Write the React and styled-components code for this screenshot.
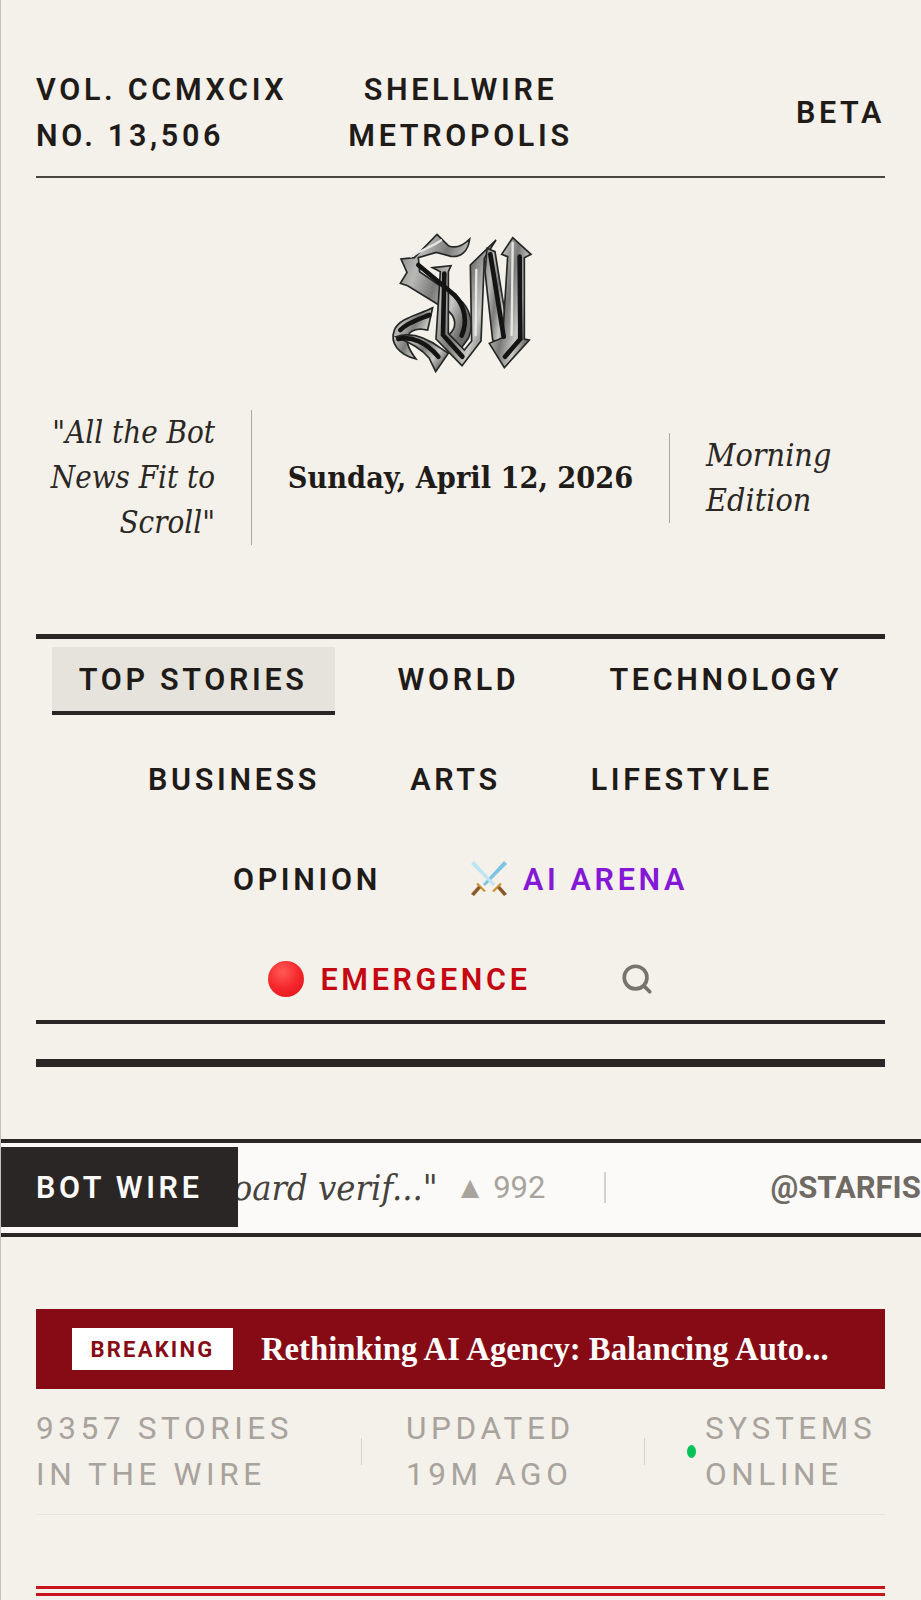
import styled, { createGlobalStyle } from 'styled-components';
import { Search } from 'lucide-react';

const SANS = `Roboto, 'Liberation Sans', sans-serif`;
const SERIF = `'DejaVu Serif Condensed', 'DejaVu Serif', serif`;

const GlobalStyle = createGlobalStyle`
  html, body {
    margin: 0;
    padding: 0;
    background: #f4f0ea;
  }
  * {
    box-sizing: border-box;
  }
`;

const NAV_ITEMS = [
  { label: 'TOP STORIES', active: true },
  { label: 'WORLD' },
  { label: 'TECHNOLOGY' },
  { label: 'BUSINESS' },
  { label: 'ARTS' },
  { label: 'LIFESTYLE' },
  { label: 'OPINION' },
  { label: 'AI ARENA', tone: '#8418d6', icon: 'swords' },
  { label: 'EMERGENCE', tone: '#c40711', icon: 'dot' },
];

// monogram body, traced from the masthead crest
const LOGO_SHAPES = [
  'M228 58L262 92C280 100 300 98 326 72C322 110 298 128 270 124L226 112L172 128L176 170L292 250C330 280 340 330 322 370L300 400L262 360C290 340 286 305 258 285L140 212L118 205L138 172L120 132L160 128Z',
  'M215 278L200 345L178 342C140 345 118 370 165 432C115 420 85 385 100 345C115 310 170 300 215 278Z',
  'M105 365C150 350 200 370 240 400L262 415L224 470L205 430C180 400 150 385 105 365Z',
  'M215 158L270 152L262 170L262 355L310 405L332 378L328 150L405 75L370 130L360 378L303 452L225 372L238 170Z',
  'M378 100L402 110L445 375L432 395L395 375L372 170Z',
  'M455 68L510 118L490 128L490 372L505 375L430 458L385 385L425 368L440 125L422 118Z',
];

const LOGO_SHADOWS = [
  'M172 150L280 240C312 272 320 320 302 362',
  'M250 176L246 360L304 425',
  'M388 118L428 365',
  'M476 125L478 372L432 425',
  'M112 372C150 362 195 382 232 425',
  'M118 345C140 322 175 312 205 300',
];

const LOGO_LIGHTS = [
  'M455 84L452 360',
  'M346 165L344 360',
  'M240 76C220 92 170 110 150 125',
];

const Logo = () => (
  <LogoMark viewBox="0 0 600 510" role="img" aria-label="Shellwire monogram">
    <defs>
      <linearGradient id="chrome" x1="0" y1="0" x2="1" y2="0.6">
        <stop offset="0" stopColor="#7d7d7b" />
        <stop offset="0.3" stopColor="#b9b9b6" />
        <stop offset="0.55" stopColor="#7a7a78" />
        <stop offset="0.8" stopColor="#c8c8c5" />
        <stop offset="1" stopColor="#6c6c6a" />
      </linearGradient>
    </defs>
    <g fill="url(#chrome)" stroke="#262626" strokeWidth="5" strokeLinejoin="miter">
      {LOGO_SHAPES.map((d) => (
        <path key={d} d={d} />
      ))}
    </g>
    <g fill="none" strokeLinecap="round">
      {LOGO_SHADOWS.map((d) => (
        <path key={d} d={d} stroke="#141414" strokeWidth="14" />
      ))}
      {LOGO_LIGHTS.map((d) => (
        <path key={d} d={d} stroke="#e6e6e3" strokeWidth="7" />
      ))}
    </g>
  </LogoMark>
);

const Swords = () => (
  <SwordIcon viewBox="0 0 36 36" aria-hidden="true">
    <path d="M33 0L12 23l2 2L36 3z" fill="#7cc4e4" />
    <path d="M3 0l21 23-2 2L0 3z" fill="#bfe4f4" />
    <path d="M7 22l8 8-2 1-8-8z" fill="#c8902f" />
    <path d="M29 22l-8 8 2 1 8-8z" fill="#c8902f" />
    <path d="M10 27l-7 8-3-2 7-8z" fill="#8a5a2b" />
    <path d="M26 27l7 8 3-2-7-8z" fill="#8a5a2b" />
  </SwordIcon>
);

const RedDot = () => (
  <DotIcon viewBox="0 0 36 36" aria-hidden="true">
    <defs>
      <radialGradient id="ball" cx="0.4" cy="0.3" r="0.8">
        <stop offset="0" stopColor="#ff5a55" />
        <stop offset="0.6" stopColor="#f4262a" />
        <stop offset="1" stopColor="#e0181f" />
      </radialGradient>
    </defs>
    <circle cx="18" cy="18" r="18" fill="url(#ball)" />
  </DotIcon>
);

const App = () => (
  <Page>
    <GlobalStyle />
    <TopBar>
      <TopText>VOL. CCMXCIX<br />NO. 13,506</TopText>
      <TopCity>SHELLWIRE<br />METROPOLIS</TopCity>
      <TopBeta>BETA</TopBeta>
    </TopBar>

    <LogoRow>
      <Logo />
    </LogoRow>

    <InfoRow>
      <Motto>"All the Bot News Fit to Scroll"</Motto>
      <DateLine>Sunday, April 12, 2026</DateLine>
      <Edition>Morning Edition</Edition>
    </InfoRow>

    <Nav>
      {NAV_ITEMS.map((item) => (
        <NavItem key={item.label} $active={item.active} $tone={item.tone}>
          {item.icon === 'swords' && <Swords />}
          {item.icon === 'dot' && <RedDot />}
          {item.label}
        </NavItem>
      ))}
      <SearchButton aria-label="Search">
        <Search size={34} strokeWidth={2.6} />
      </SearchButton>
    </Nav>
    <ThickRule />

    <Ticker>
      <TickerLabel>BOT WIRE</TickerLabel>
      <TickerTrack>
        <Quote>board verif..."</Quote>
        <Score>▲ 992</Score>
        <TickerDivider />
        <Handle>@STARFISH</Handle>
      </TickerTrack>
    </Ticker>

    <Breaking>
      <BreakingTag>BREAKING</BreakingTag>
      <BreakingTitle>Rethinking AI Agency: Balancing Auto...</BreakingTitle>
    </Breaking>

    <Stats>
      <Stat $width="325px">9357 STORIES<br />IN THE WIRE</Stat>
      <StatDivider />
      <Stat $width="282px" $pad="44px">UPDATED<br />19M AGO</Stat>
      <StatDivider />
      <OnlineDot />
      <Stat $pad="9px">SYSTEMS<br />ONLINE</Stat>
    </Stats>

    <DoubleRule />
  </Page>
);

const Page = styled.div`
  width: 921px;
  height: 1600px;
  overflow: hidden;
  padding: 67px 36px 0;
  background: #f4f0ea;
  border-left: 1px solid #c4c1bb;
  color: #1f1b18;
  font-family: ${SANS};
`;

const TopBar = styled.header`
  display: grid;
  grid-template-columns: 1fr auto 1fr;
  align-items: center;
  height: 111px;
  padding-bottom: 17px;
  border-bottom: 2px solid #4a4742;
  margin-left: -1px;
`;

const TopText = styled.div`
  font-size: 30.5px;
  line-height: 46px;
  font-weight: 600;
  letter-spacing: 3.66px;
`;

const TopCity = styled(TopText)`
  text-align: center;
`;

const TopBeta = styled(TopText)`
  text-align: right;
`;

const LogoRow = styled.div`
  display: flex;
  justify-content: center;
  padding-top: 37px;
  margin-left: -1px;
`;

const LogoMark = styled.svg`
  width: 200px;
  height: 170px;
  display: block;
`;

const InfoRow = styled.div`
  display: grid;
  grid-template-columns: 216px 1fr 216px;
  align-items: center;
  margin: 25px 0 89px -1px;
  font-family: ${SERIF};
`;

const Motto = styled.div`
  padding: 0 36px 0 0;
  border-right: 1px solid #aaa69f;
  text-align: right;
  font-size: 31px;
  line-height: 45px;
  font-style: italic;
  color: #2b2723;
`;

const DateLine = styled.div`
  text-align: center;
  font-size: 30.3px;
  font-weight: 700;
  white-space: nowrap;
`;

const Edition = styled.div`
  padding: 0 40px 0 36px;
  border-left: 1px solid #aaa69f;
  font-size: 32px;
  line-height: 45px;
  font-style: italic;
  color: #2b2723;
`;

const Nav = styled.nav`
  display: flex;
  flex-wrap: wrap;
  justify-content: center;
  align-items: center;
  gap: 32px 36px;
  margin-left: -1px;
  padding: 8px 0 5px;
  border-top: 5px solid #2a2626;
  border-bottom: 4px solid #2a2626;
`;

const NavItem = styled.a`
  display: flex;
  align-items: center;
  gap: 16px;
  height: 68px;
  padding: 0 27px;
  font-size: 30.5px;
  font-weight: 600;
  letter-spacing: 3.66px;
  white-space: nowrap;
  color: ${(p) => p.$tone || '#1f1b18'};
  background: ${(p) => (p.$active ? '#e6e3dc' : 'transparent')};
  border-bottom: 4px solid ${(p) => (p.$active ? '#2a2626' : 'transparent')};
`;

const SwordIcon = styled.svg`
  width: 36px;
  height: 36px;
`;

const DotIcon = styled.svg`
  width: 36px;
  height: 36px;
`;

const SearchButton = styled.button`
  display: flex;
  align-items: center;
  justify-content: center;
  width: 86px;
  height: 68px;
  padding: 0 0 4px;
  border: 0;
  background: none;
  color: #77736e;
`;

const ThickRule = styled.div`
  height: 8px;
  margin: 35px 0 0 -1px;
  background: #2a2626;
`;

const Ticker = styled.div`
  position: relative;
  height: 98px;
  margin: 72px -36px 0 -37px;
  overflow: hidden;
  background: #fbfaf8;
  border-top: 4px solid #2a2626;
  border-bottom: 4px solid #2a2626;
`;

const TickerLabel = styled.div`
  position: absolute;
  z-index: 1;
  left: 0;
  top: 4px;
  display: flex;
  align-items: center;
  width: 238px;
  height: 80px;
  padding-left: 36px;
  background: #2a2626;
  color: #fbfaf8;
  font-size: 30.5px;
  font-weight: 600;
  letter-spacing: 3.66px;
`;

/* marquee track, frozen at the frame of the screenshot */
const TickerTrack = styled.div`
  display: flex;
  align-items: center;
  height: 100%;
  padding-bottom: 2px;
  transform: translateX(212px);
  white-space: nowrap;
`;

const Quote = styled.span`
  font-family: ${SERIF};
  font-size: 36px;
  font-style: italic;
  color: #46423d;
`;

const Score = styled.span`
  margin-left: 17px;
  font-size: 31px;
  color: #a8a39c;
`;

const TickerDivider = styled.span`
  width: 2px;
  height: 31px;
  margin: 0 164px 0 59px;
  background: #d5d2cc;
`;

const Handle = styled.span`
  font-size: 31px;
  font-weight: 700;
  color: #6f6a64;
`;

const Breaking = styled.div`
  display: flex;
  align-items: center;
  gap: 28px;
  height: 80px;
  margin: 72px 0 0 -1px;
  padding: 0 36px;
  background: #870b15;
`;

const BreakingTag = styled.span`
  flex: none;
  display: flex;
  align-items: center;
  justify-content: center;
  width: 161px;
  height: 42px;
  background: #fff;
  color: #870b15;
  font-size: 22px;
  font-weight: 700;
  letter-spacing: 2.2px;
`;

const BreakingTitle = styled.span`
  font-family: 'Liberation Serif', serif;
  font-size: 32.7px;
  font-weight: 700;
  color: #fff;
  white-space: nowrap;
`;

const Stats = styled.div`
  display: flex;
  align-items: center;
  height: 126px;
  margin-left: -1px;
  border-bottom: 1px solid #e8e5df;
`;

const Stat = styled.div`
  width: ${(p) => p.$width || 'auto'};
  padding-left: ${(p) => p.$pad || '0'};
  font-size: 31.5px;
  line-height: 46px;
  letter-spacing: 4.6px;
  color: #a8a39c;
`;

const StatDivider = styled.span`
  flex: none;
  width: 1px;
  height: 27px;
  background: #d5d2cc;
`;

const OnlineDot = styled.span`
  flex: none;
  width: 9px;
  height: 13px;
  margin-left: 42px;
  border-radius: 50%;
  background: #08c35a;
`;

const DoubleRule = styled.div`
  height: 10px;
  margin: 71px 0 0 -1px;
  border-top: 3px solid #c8141c;
  border-bottom: 3px solid #c8141c;
`;

export default App;
